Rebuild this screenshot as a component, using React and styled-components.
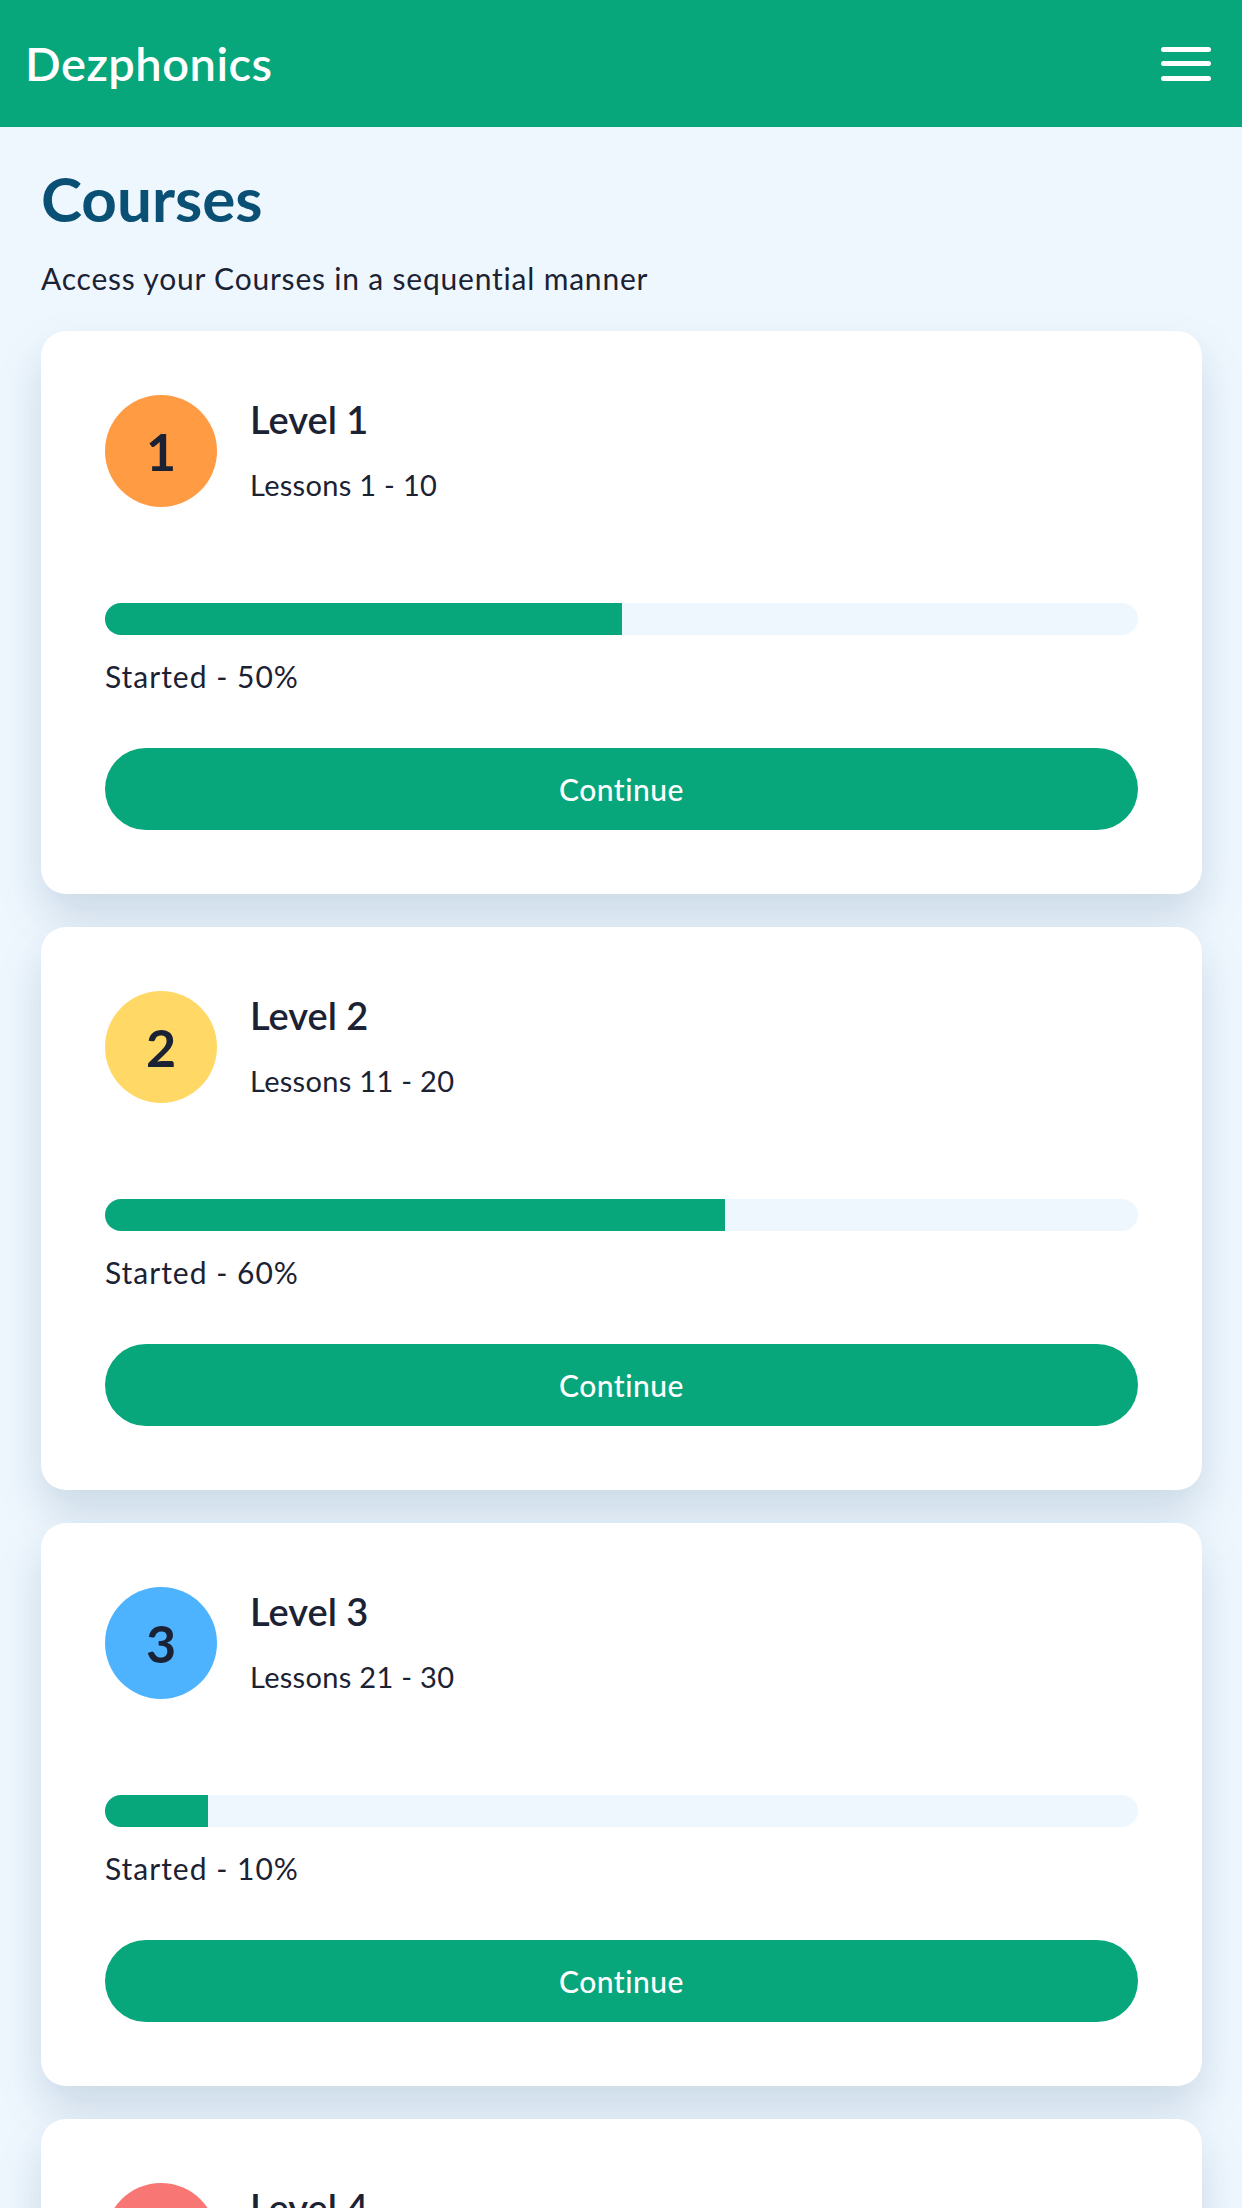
import React from "react";
import styled, { createGlobalStyle } from "styled-components";

const GlobalStyle = createGlobalStyle`
  html, body {
    margin: 0;
    padding: 0;
    background: #eff7fe;
  }
  body {
    font-family: Lato, "Open Sans", "Noto Sans", sans-serif;
    color: #1b2233;
  }
  * { box-sizing: border-box; }
`;

const Page = styled.div`
  min-height: 100vh;
  background: #eff7fe;
`;

const TopBar = styled.header`
  height: 127px;
  background: #08a67b;
  display: flex;
  align-items: center;
  justify-content: space-between;
  padding: 0 31px 0 25px;
`;

const Logo = styled.div`
  color: #ffffff;
  font-size: 47px;
  font-weight: 600;
  line-height: 1.2;
  letter-spacing: 0.5px;
`;

const MenuButton = styled.button`
  width: 50px;
  height: 40px;
  border: 0;
  background: transparent;
  padding: 0;
  display: flex;
  flex-direction: column;
  justify-content: center;
  gap: 9.5px;
  cursor: pointer;
`;

const MenuLine = styled.span`
  display: block;
  width: 50px;
  height: 5px;
  border-radius: 3px;
  background: #ffffff;
`;

const Main = styled.main`
  padding: 34px 40px 40px 41px;
`;

const Title = styled.h1`
  margin: 0;
  font-size: 62px;
  line-height: 1.2;
  font-weight: 700;
  color: #0a4f74;
`;

const Subtitle = styled.p`
  margin: 25px 0 0;
  font-size: 30px;
  line-height: 1.2;
  font-weight: 400;
  letter-spacing: 0.8px;
  color: #1b2233;
`;

const CardList = styled.div`
  margin-top: 35px;
  display: flex;
  flex-direction: column;
  gap: 33px;
`;

const Card = styled.section`
  background: #ffffff;
  border-radius: 25px;
  padding: 64px;
  box-shadow: 0 22px 44px rgba(20, 70, 110, 0.17);
`;

const CardHead = styled.div`
  display: flex;
  align-items: flex-start;
  gap: 33px;
  margin-bottom: 96px;
`;

const Badge = styled.div`
  flex: 0 0 112px;
  width: 112px;
  height: 112px;
  border-radius: 50%;
  background: ${(p) => p.$color};
  display: flex;
  align-items: center;
  justify-content: center;
  font-size: 52px;
  font-weight: 700;
  color: #1b2233;
  line-height: 1;
`;

const HeadText = styled.div`
  display: flex;
  flex-direction: column;
  padding-top: 2px;
`;

const LevelName = styled.h2`
  margin: 0;
  font-size: 38px;
  line-height: 1.2;
  font-weight: 600;
  color: #1b2233;
`;

const Lessons = styled.div`
  margin-top: 25px;
  font-size: 29px;
  line-height: 1.2;
  letter-spacing: 0.3px;
  color: #1b2233;
`;

const Track = styled.div`
  height: 32px;
  border-radius: 16px;
  background: #eff7fe;
  overflow: hidden;
`;

const Fill = styled.div`
  height: 100%;
  background: #08a67b;
`;

const Status = styled.div`
  margin-top: 23px;
  font-size: 30px;
  line-height: 1.2;
  letter-spacing: 1px;
  color: #1b2233;
`;

const ContinueButton = styled.button`
  margin-top: 54px;
  width: 100%;
  height: 82px;
  border: 0;
  border-radius: 41px;
  background: #08a67b;
  color: #ffffff;
  font-family: inherit;
  font-size: 30px;
  font-weight: 500;
  letter-spacing: 0.5px;
  cursor: pointer;
`;

const levels = [
  { n: 1, color: "#ff9b42", lessons: "Lessons 1 - 10", pct: 50 },
  { n: 2, color: "#ffd866", lessons: "Lessons 11 - 20", pct: 60 },
  { n: 3, color: "#4db3ff", lessons: "Lessons 21 - 30", pct: 10 },
  { n: 4, color: "#f87673", lessons: "Lessons 31 - 40", pct: 0 },
];

export default function App() {
  return (
    <Page>
      <GlobalStyle />
      <TopBar>
        <Logo>Dezphonics</Logo>
        <MenuButton aria-label="Menu">
          <MenuLine />
          <MenuLine />
          <MenuLine />
        </MenuButton>
      </TopBar>
      <Main>
        <Title>Courses</Title>
        <Subtitle>Access your Courses in a sequential manner</Subtitle>
        <CardList>
          {levels.map((l) => (
            <Card key={l.n}>
              <CardHead>
                <Badge $color={l.color}>{l.n}</Badge>
                <HeadText>
                  <LevelName>Level {l.n}</LevelName>
                  <Lessons>{l.lessons}</Lessons>
                </HeadText>
              </CardHead>
              <Track>
                <Fill style={{ width: `${l.pct}%` }} />
              </Track>
              <Status>Started - {l.pct}%</Status>
              <ContinueButton>Continue</ContinueButton>
            </Card>
          ))}
        </CardList>
      </Main>
    </Page>
  );
}
